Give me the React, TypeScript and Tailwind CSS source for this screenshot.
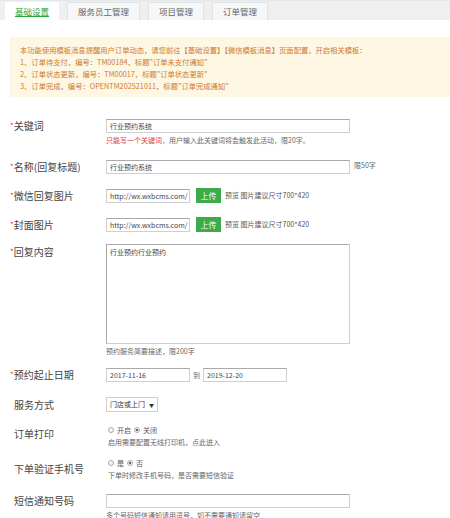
import React from 'react';

const tabs = ['基础设置', '服务员工管理', '项目管理', '订单管理'];

const inputCls =
  'h-[14px] border border-[#cfcfcf] border-t-[#a9a9a9] bg-white px-[3px] text-[7px] leading-[12px] text-[#444] overflow-hidden whitespace-nowrap';

const Label = ({ text, req, pt = 'pt-0' }: { text: string; req?: boolean; pt?: string }) => (
  <div className={`w-[96px] shrink-0 text-[10px] leading-[14px] text-[#444] ${pt}`}>
    {req && <span className="text-[#e4393c] text-[8px] align-top">*</span>}
    {!req && <span className="inline-block w-[4px]" />}
    {text}
  </div>
);

const Hint = ({ children }: { children: React.ReactNode }) => (
  <div className="text-[7px] leading-[10px] text-[#666] mt-[2px]">{children}</div>
);

const Radio = ({ on, label }: { on?: boolean; label: string }) => (
  <span className="inline-flex items-center gap-[3px] mr-[3px]">
    <span className="w-[6px] h-[6px] rounded-full border border-[#aaa] bg-[#f3f3f3] flex items-center justify-center">
      {on && <span className="w-[2px] h-[2px] rounded-full bg-[#333]" />}
    </span>
    <span>{label}</span>
  </span>
);

const Upload = () => (
  <div className="flex items-center">
    <div className={`${inputCls} w-[84px]`}>http://wx.wxbcms.com/</div>
    <div className="ml-[6px] w-[25px] h-[15px] bg-[#3dab49] text-white text-[8px] leading-[15px] text-center">上传</div>
    <span className="ml-[4px] text-[7px] text-[#555]">预览 图片建议尺寸700*420</span>
  </div>
);

export default function App() {
  return (
    <div className="w-[450px] h-[518px] overflow-hidden bg-white font-['Noto_Sans_CJK_SC',sans-serif]">
      <div className="h-[20px] bg-[#efefef] border-t border-[#e3e8ee] flex items-end pl-[5px] gap-[8px]">
        {tabs.map((t, i) => (
          <div
            key={t}
            className={
              i === 0
                ? 'h-[18px] px-[10px] bg-white text-[8.5px] leading-[18px] text-[#2aa53a] underline'
                : 'h-[18px] px-[10px] bg-[#f7f7f7] border border-b-0 border-[#e2e2e2] text-[8.5px] leading-[17px] text-[#666]'
            }
          >
            {t}
          </div>
        ))}
      </div>

      <div className="ml-[10px] mt-[17px] h-[60px] bg-[#fdf7e4] pl-[10px] pt-[7px] text-[7.3px] leading-[12px] text-[#cf7a2c]">
        <div>本功能使用模板消息提醒用户订单动态，请您前往【基础设置】【微信模板消息】页面配置，开启相关模板：</div>
        <div>1、订单待支付，编号：TM00184，标题"订单未支付通知"</div>
        <div>2、订单状态更新，编号：TM00017，标题"订单状态更新"</div>
        <div>3、订单完成，编号：OPENTM202521011，标题"订单完成通知"</div>
      </div>

      <div className="pl-[10px]">
        <div className="flex mt-[22px]">
          <Label text="关键词" req />
          <div>
            <div className={`${inputCls} w-[244px]`}>行业预约系统</div>
            <div className="text-[7px] leading-[10px] text-[#666] mt-[2px]">
              <span className="text-[#e4393c]">只能写一个关键词</span>，用户输入此关键词将会触发此活动，限20字。
            </div>
          </div>
        </div>

        <div className="flex mt-[15px]">
          <Label text="名称(回复标题)" req />
          <div className="flex items-start">
            <div className={`${inputCls} w-[244px]`}>行业预约系统</div>
            <span className="ml-[4px] text-[7px] leading-[10px] text-[#666]">限50字</span>
          </div>
        </div>

        <div className="flex mt-[14px] items-center">
          <Label text="微信回复图片" req />
          <Upload />
        </div>

        <div className="flex mt-[14px] items-center">
          <Label text="封面图片" req />
          <Upload />
        </div>

        <div className="flex mt-[12px]">
          <Label text="回复内容" req pt="pt-[1px]" />
          <div>
            <div className="w-[244px] h-[100px] border border-[#cfcfcf] border-t-[#a9a9a9] border-l-[#a9a9a9] px-[3px] pt-[1px] text-[7px] leading-[12px] text-[#444]">
              行业预约行业预约
            </div>
            <Hint>预约服务简要描述，限200字</Hint>
          </div>
        </div>

        <div className="flex mt-[12px] items-center">
          <Label text="预约起止日期" req />
          <div className="flex items-center">
            <div className={`${inputCls} w-[84px]`}>2017-11-16</div>
            <span className="mx-[3px] text-[7px] text-[#666]">到</span>
            <div className={`${inputCls} w-[84px]`}>2019-12-20</div>
          </div>
        </div>

        <div className="flex mt-[15px] items-center">
          <Label text="服务方式" />
          <div className="h-[15px] w-[52px] border border-[#cfcfcf] px-[3px] text-[7px] leading-[13px] text-[#333] flex items-center gap-[4px]">
            <span>门店或上门</span>
            <span className="text-[5px]">▼</span>
          </div>
        </div>

        <div className="flex mt-[13px]">
          <Label text="订单打印" pt="pt-[2px]" />
          <div className="pl-[2px]">
            <div className="text-[7px] leading-[10px] text-[#555] flex">
              <Radio label="开启" />
              <Radio on label="关闭" />
            </div>
            <Hint>启用需要配置无线打印机，点此进入</Hint>
          </div>
        </div>

        <div className="flex mt-[11px]">
          <Label text="下单验证手机号" pt="pt-[4px]" />
          <div className="pl-[2px]">
            <div className="text-[7px] leading-[10px] text-[#555] flex">
              <Radio label="是" />
              <Radio on label="否" />
            </div>
            <Hint>下单时修改手机号码，是否需要短信验证</Hint>
          </div>
        </div>

        <div className="flex mt-[14px]">
          <Label text="短信通知号码" />
          <div>
            <div className={`${inputCls} w-[244px]`}></div>
            <Hint>多个号码短信通知请用逗号，如不需要通知请留空</Hint>
          </div>
        </div>
      </div>
    </div>
  );
}
